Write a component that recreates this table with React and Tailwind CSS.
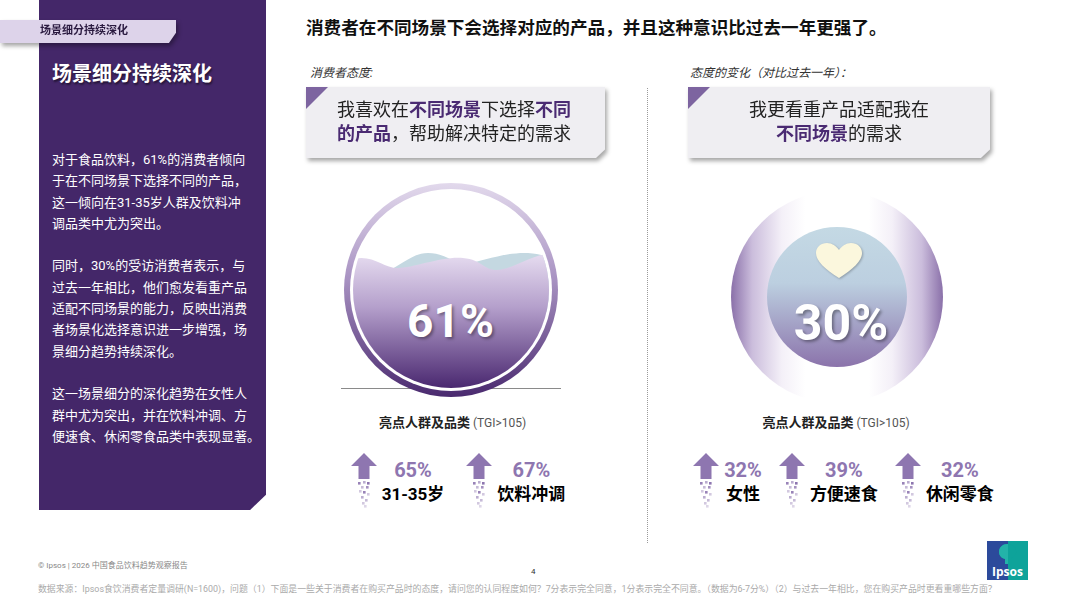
import React from "react";

const font = { fontFamily: 'Roboto, "Noto Sans CJK SC", sans-serif' };

const dots = [
  [8, 29, 0.9], [13, 28, 0.6], [17, 29, 1], [11, 33, 0.5], [16, 33, 0.8],
  [9, 37, 0.4], [13, 38, 0.9], [17, 40, 0.4], [11, 43, 0.6], [15, 46, 0.5],
  [12, 49, 0.4], [14, 52, 0.3],
];

const UpArrow = () => (
  <svg width="28" height="55" viewBox="0 0 28 55" className="shrink-0">
    <polygon points="14,0 27,13 19.5,13 19.5,26 8.5,26 8.5,13 1,13" fill="#8e76b0" />
    {dots.map(([x, y, o], i) => (
      <rect key={i} x={x} y={y} width="2.6" height="2.6" fill="#8e76b0" opacity={o} />
    ))}
  </svg>
);

const Stat = ({ pct, label }) => (
  <div className="flex items-start gap-[4px] shrink-0">
    <UpArrow />
    <div className="flex flex-col items-center pt-[6px] whitespace-nowrap">
      <span className="text-[20px] leading-[22px] font-bold text-[#8e76b0]">{pct}</span>
      <span className="text-[17px] leading-[26px] font-bold text-black">{label}</span>
    </div>
  </div>
);

const Card = ({ children, center }) => (
  <div className="[filter:drop-shadow(2px_3px_2px_rgba(0,0,0,0.35))]">
    <div
      className={`relative h-[71px] bg-[#efeef2] pt-[11px] [clip-path:polygon(0_0,100%_0,100%_88%,97%_100%,0_100%)] ${
        center ? "text-center" : "pl-[31px]"
      }`}
    >
      <div className="absolute top-0 left-0 w-[22px] h-[22px] bg-[#7d64a0] [clip-path:polygon(0_0,100%_0,0_100%)]" />
      <p className="text-[18px] leading-[24px] text-[#222]">{children}</p>
    </div>
  </div>
);

const B = ({ children }) => <span className="font-bold text-[#4a2a72]">{children}</span>;

const Highlights = () => (
  <p className="text-center leading-[18px]">
    <span className="text-[13px] font-bold text-[#222]">亮点人群及品类</span>
    <span className="text-[12px] text-[#555]"> (TGI&gt;105)</span>
  </p>
);

const WaterCircle = () => (
  <div className="relative w-[214px] h-[214px]">
    <div className="absolute left-[-3px] right-[-3px] top-[205px] h-px bg-[#8a8a8a]" />
    <div className="relative w-full h-full rounded-full p-[6px] bg-[linear-gradient(180deg,#e2d9ec_0%,#a892c2_45%,#4a2a6f_100%)]">
      <div className="w-full h-full rounded-full bg-white p-[3px]">
        <svg viewBox="0 0 196 196" className="w-full h-full">
          <defs>
            <clipPath id="cc">
              <circle cx="98" cy="98" r="98" />
            </clipPath>
            <linearGradient id="wf" x1="0" y1="0" x2="0" y2="1">
              <stop offset="0%" stopColor="#e6dcf0" />
              <stop offset="40%" stopColor="#b49fcb" />
              <stop offset="100%" stopColor="#4a2870" />
            </linearGradient>
          </defs>
          <g clipPath="url(#cc)">
            <rect width="196" height="196" fill="#fff" />
            <path
              d="M30 82 C50 72 60 61 75 61 C90 61 100 70 110 72 C130 70 150 60 175 61 C190 62 196 65 196 70 L196 120 L30 120 Z"
              fill="#c4d8e1"
            />
            <path
              d="M0 67 C20 62 30 76 45 76 S90 64 110 66 S130 78 144 78 S180 62 196 62 L196 196 L0 196 Z"
              fill="url(#wf)"
            />
          </g>
        </svg>
      </div>
    </div>
    <span className="absolute inset-x-0 top-[112px] text-center text-[46px] leading-[52px] font-bold text-white [text-shadow:2px_2px_3px_rgba(0,0,0,0.35)]">
      61%
    </span>
  </div>
);

const HeartCircle = () => (
  <div className="relative w-[212px] h-[212px] rounded-full flex items-center justify-center bg-[linear-gradient(90deg,#8a70a9_0%,#cbbddc_10%,#f4f0f8_24%,#ffffff_35%,#ffffff_65%,#f4f0f8_76%,#cbbddc_90%,#8a70a9_100%)]">
    <div className="w-[140px] h-[140px] rounded-full bg-[linear-gradient(180deg,#c4d9e4_0%,#bccfe0_40%,#8b73ab_100%)]" />
    <svg
      width="48"
      height="37"
      viewBox="0 0 48 37"
      className="absolute left-[84px] top-[51px] [filter:drop-shadow(1px_1px_1px_rgba(0,0,0,0.25))]"
    >
      <path
        d="M24 36 C10 27 1 19 1 11 C1 5 6 1 12 1 C17 1 21 4 24 8 C27 4 31 1 36 1 C42 1 47 5 47 11 C47 19 38 27 24 36 Z"
        fill="#fbf7dd"
      />
    </svg>
    <span className="absolute inset-x-0 top-[104px] pl-[8px] text-center text-[50px] leading-[56px] font-bold text-white [text-shadow:2px_2px_3px_rgba(0,0,0,0.35)]">
      30%
    </span>
  </div>
);

const IpsosLogo = () => (
  <div className="relative w-[41px] h-[39px] bg-[linear-gradient(90deg,#2c4a9b_50%,#0ea39a_50%)] flex flex-col items-center justify-end pb-[2px]">
    <svg width="18" height="20" viewBox="0 0 18 20" className="absolute top-[3px] left-[12px]">
      <path d="M8 0 C14 0 18 4 17 9 C16 12 13 13 12 15 L12 20 L6 20 L6 15 C2 14 0 11 0 8 C0 3 4 0 8 0 Z" fill="#0ea39a" />
      <path d="M8 0 C4 0 0 3 0 8 C0 11 2 14 6 15 L6 20 L9 20 L9 0 Z" fill="#23b3a9" />
    </svg>
    <span className="relative text-[12px] leading-[13px] font-bold text-white" style={{ fontFamily: '"Open Sans", sans-serif' }}>
      Ipsos
    </span>
  </div>
);

export default function App() {
  return (
    <div className="relative w-[1067px] h-[600px] bg-white overflow-hidden" style={font}>
      {/* section tag */}
      <div className="absolute z-10 left-0 top-[20px] [filter:drop-shadow(2px_3px_2px_rgba(0,0,0,0.35))]">
        <div className="w-[176px] h-[23px] bg-[#ddd3ea] pl-[40px] flex items-center [clip-path:polygon(0_0,100%_0,100%_55%,96%_100%,0_100%)]">
          <span className="text-[11px] font-bold text-[#2a1a40]">场景细分持续深化</span>
        </div>
      </div>

      <div className="flex h-[540px]">
        {/* left panel */}
        <div className="ml-[39px] w-[227px] h-[510px] bg-[#442769] pt-[60px] pl-[13px] pr-[10px] text-white [clip-path:polygon(0_0,100%_0,100%_97%,93%_100%,0_100%)]">
          <h1 className="text-[20px] leading-[28px] font-bold [text-shadow:1px_2px_2px_rgba(0,0,0,0.5)]">
            场景细分持续深化
          </h1>
          <div className="mt-[61px] text-[13px] leading-[21.3px] whitespace-nowrap">
            <p>
              对于食品饮料，61%的消费者倾向<br />
              于在不同场景下选择不同的产品，<br />
              这一倾向在31-35岁人群及饮料冲<br />
              调品类中尤为突出。
            </p>
            <p className="mt-[21.3px]">
              同时，30%的受访消费者表示，与<br />
              过去一年相比，他们愈发看重产品<br />
              适配不同场景的能力，反映出消费<br />
              者场景化选择意识进一步增强，场<br />
              景细分趋势持续深化。
            </p>
            <p className="mt-[21.3px]">
              这一场景细分的深化趋势在女性人<br />
              群中尤为突出，并在饮料冲调、方<br />
              便速食、休闲零食品类中表现显著。
            </p>
          </div>
        </div>

        {/* main */}
        <div className="pl-[40px] pt-[17px]">
          <h2 className="text-[17.6px] leading-[22px] font-bold text-[#111] whitespace-nowrap">
            消费者在不同场景下会选择对应的产品，并且这种意识比过去一年更强了。
          </h2>
          <div className="flex mt-[24px]">
            {/* column 1 */}
            <div className="w-[299px] flex flex-col">
              <p className="pl-[4px] text-[12px] leading-[20px] italic text-[#333]">消费者态度:</p>
              <div className="mt-[4px]">
                <Card>
                  我喜欢在<B>不同场景</B>下选择<B>不同</B>
                  <br />
                  <B>的产品</B>，帮助解决特定的需求
                </Card>
              </div>
              <div className="mt-[25px] flex justify-center pr-[10px]">
                <WaterCircle />
              </div>
              <div className="mt-[16px] pr-[6px]">
                <Highlights />
              </div>
              <div className="mt-[21px] flex justify-center gap-[21px] pl-[4px]">
                <Stat pct="65%" label="31-35岁" />
                <Stat pct="67%" label="饮料冲调" />
              </div>
            </div>

            {/* divider */}
            <div className="ml-[42px] mt-[25px] h-[455px] border-l border-dotted border-[#9a9a9a]" />

            {/* column 2 */}
            <div className="ml-[40px] w-[302px] flex flex-col">
              <p className="pl-[2px] text-[12px] leading-[20px] italic text-[#333]">态度的变化（对比过去一年）：</p>
              <div className="mt-[4px]">
                <Card center>
                  我更看重产品适配我在
                  <br />
                  <B>不同场景</B>的需求
                </Card>
              </div>
              <div className="mt-[33px] flex justify-center pr-[4px]">
                <HeartCircle />
              </div>
              <div className="mt-[10px] pr-[6px]">
                <Highlights />
              </div>
              <div className="mt-[21px] flex justify-center gap-[16px] pl-[8px]">
                <Stat pct="32%" label="女性" />
                <Stat pct="39%" label="方便速食" />
                <Stat pct="32%" label="休闲零食" />
              </div>
            </div>
          </div>
        </div>
      </div>

      {/* footer */}
      <div className="pl-[38px] pr-[39px]">
        <div className="flex h-[44px]">
          <p className="w-[493px] mt-[21px] text-[8px] leading-[10px] text-[#888]">
            © Ipsos | 2026 中国食品饮料趋势观察报告
          </p>
          <p className="mt-[27px] text-[8px] leading-[10px] text-[#333]">4</p>
          <div className="flex-1" />
          <div className="mt-[1px]">
            <IpsosLogo />
          </div>
        </div>
        <p className="text-[8.9px] leading-[10px] text-[#aaa] whitespace-nowrap">
          数据来源：Ipsos食饮消费者定量调研(N=1600)，问题（1）下面是一些关于消费者在购买产品时的态度，请问您的认同程度如何？7分表示完全同意，1分表示完全不同意。（数据为6-7分%）（2）与过去一年相比，您在购买产品时更看重哪些方面？
        </p>
      </div>
    </div>
  );
}
